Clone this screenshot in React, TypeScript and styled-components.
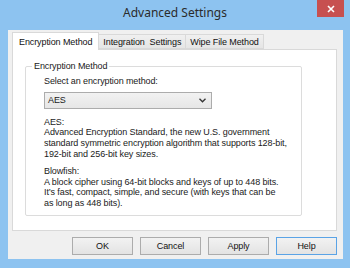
import React from "react";
import styled, { createGlobalStyle } from "styled-components";

const Global = createGlobalStyle`
  html, body {
    margin: 0;
    padding: 0;
    background: #8dc3f0;
  }
  * { box-sizing: border-box; }
`;

const Window = styled.div`
  width: 350px;
  height: 268px;
  background: #8dc3f0;
  display: flex;
  flex-direction: column;
  font-family: "Liberation Sans", Arial, sans-serif;
  font-size: 9px;
  letter-spacing: -0.1px;
  color: #1a1a1a;
`;

const TitleBar = styled.div`
  height: 30px;
  display: flex;
  align-items: flex-start;
  position: relative;
`;

const Title = styled.div`
  flex: 1;
  text-align: center;
  font-family: "Noto Sans", "Open Sans", sans-serif;
  font-size: 12px;
  letter-spacing: 0;
  line-height: 26px;
  color: #2b2b2b;
`;

const CloseButton = styled.div`
  position: absolute;
  top: 0;
  right: 6px;
  width: 27px;
  height: 17px;
  background: #c75050;
  display: flex;
  align-items: center;
  justify-content: center;
`;

const Client = styled.div`
  flex: 1;
  margin: 0 7px 9px 8px;
  background: #f0f0f0;
  padding: 2px 6px 0 4px;
  display: flex;
  flex-direction: column;
`;

const TabStrip = styled.div`
  display: flex;
  align-items: flex-end;
  height: 17px;
  position: relative;
  z-index: 1;
`;

const Tab = styled.div<{ $active?: boolean }>`
  height: ${(p) => (p.$active ? "18px" : "15px")};
  margin-bottom: ${(p) => (p.$active ? "-1px" : "0")};
  padding: 0 ${(p) => (p.$active ? "6px" : "4px")};
  display: flex;
  align-items: center;
  border: 1px solid #d9d9d9;
  border-bottom: ${(p) => (p.$active ? "none" : "1px solid #d9d9d9")};
  background: ${(p) => (p.$active ? "#ffffff" : "linear-gradient(#f0f0f0, #e5e5e5)")};
  margin-left: ${(p) => (p.$active ? "0" : "-1px")};
  white-space: pre;
  color: #111;
`;

const Panel = styled.div`
  height: 182px;
  background: #fff;
  border: 1px solid #d9d9d9;
  padding: 11px 34px 0 12px;
`;

const Group = styled.fieldset`
  margin: 0;
  height: 155px;
  border: 1px solid #dcdcdc;
  border-radius: 2px;
  padding: 4px 4px 0 18px;
  display: flex;
  flex-direction: column;
`;

const Legend = styled.legend`
  padding: 0 2px;
  margin-left: -12px;
  color: #1a1a1a;
`;

const Label = styled.div`
  line-height: 12px;
`;

const Select = styled.div`
  margin-top: 5px;
  width: 168px;
  height: 17px;
  border: 1px solid #acacac;
  background: linear-gradient(#f2f2f2, #e6e6e6);
  display: flex;
  align-items: center;
  justify-content: space-between;
  padding: 0 5px 0 3px;
`;

const Description = styled.div`
  margin-top: 8px;
  line-height: 10.8px;
`;

const Block = styled.p`
  margin: 0 0 6px;
  white-space: pre-line;
`;

const ButtonRow = styled.div`
  display: flex;
  justify-content: flex-end;
  gap: 7px;
  padding: 6px 0 0;
`;

const Button = styled.div<{ $focused?: boolean }>`
  width: 61px;
  height: 18px;
  border: 1px solid ${(p) => (p.$focused ? "#5aa3e6" : "#acacac")};
  background: linear-gradient(#f2f2f2, #e3e3e3);
  display: flex;
  align-items: center;
  justify-content: center;
  color: #111;
`;

export default function App() {
  return (
    <Window>
      <Global />
      <TitleBar>
        <Title>Advanced Settings</Title>
        <CloseButton>
          <svg width="8" height="8" viewBox="0 0 8 8">
            <path d="M1 1 L7 7 M7 1 L1 7" stroke="#fff" strokeWidth="1.6" />
          </svg>
        </CloseButton>
      </TitleBar>
      <Client>
        <TabStrip>
          <Tab $active>Encryption Method</Tab>
          <Tab>Integration  Settings</Tab>
          <Tab>Wipe File Method</Tab>
        </TabStrip>
        <Panel>
          <Group>
            <Legend>Encryption Method</Legend>
            <Label>Select an encryption method:</Label>
            <Select>
              <span>AES</span>
              <svg width="7" height="5" viewBox="0 0 7 5">
                <path d="M0.5 0.8 L3.5 3.8 L6.5 0.8" stroke="#333" strokeWidth="1.3" fill="none" />
              </svg>
            </Select>
            <Description>
              <Block>
                {"AES:\nAdvanced Encryption Standard, the new U.S. government\nstandard symmetric encryption algorithm that supports 128-bit,\n192-bit and 256-bit key sizes."}
              </Block>
              <Block>
                {"Blowfish:\nA block cipher using 64-bit blocks and keys of up to 448 bits.\nIt’s fast, compact, simple, and secure (with keys that can be\nas long as 448 bits)."}
              </Block>
            </Description>
          </Group>
        </Panel>
        <ButtonRow>
          <Button>OK</Button>
          <Button>Cancel</Button>
          <Button>Apply</Button>
          <Button $focused>Help</Button>
        </ButtonRow>
      </Client>
    </Window>
  );
}
